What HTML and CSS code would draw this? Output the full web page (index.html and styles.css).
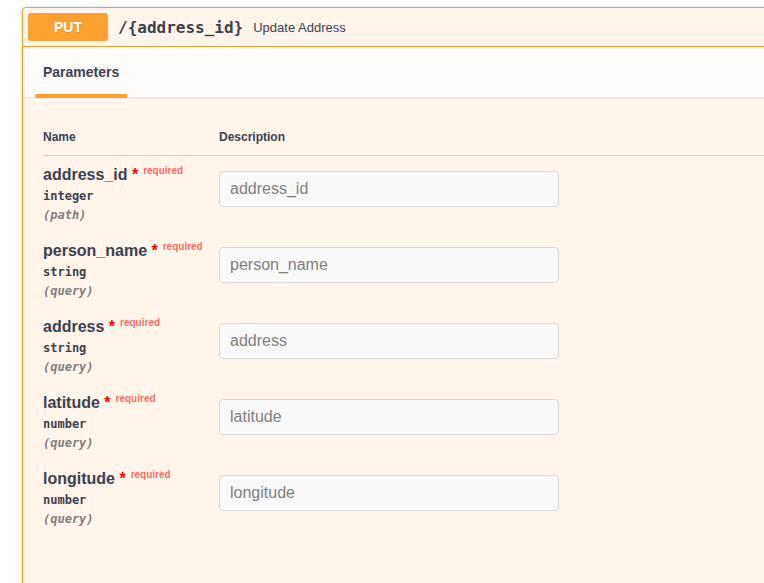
FILE: index.html
```html
<!DOCTYPE html>
<html>
<head>
<meta charset="utf-8">
<link rel="stylesheet" href="styles.css">
</head>
<body>
<div class="page">
  <div class="opblock">
    <div class="summary">
      <span class="method">PUT</span>
      <span class="path">/{address_id}</span>
      <span class="desc">Update Address</span>
    </div>
    <div class="section-header">
      <div class="tab-item"><h4><span class="tab-label">Parameters</span></h4></div>
    </div>
    <div class="table-container">
      <div class="params">
        <div class="th">Name</div>
        <div class="th">Description</div>

        <div class="col-name">
          <div class="pname">address_id<span class="star">&nbsp;*</span><span class="req">required</span></div>
          <div class="ptype">integer</div>
          <div class="pin">(path)</div>
        </div>
        <div class="col-desc"><input class="field" type="text" placeholder="address_id"></div>

        <div class="col-name">
          <div class="pname">person_name<span class="star">&nbsp;*</span><span class="req">required</span></div>
          <div class="ptype">string</div>
          <div class="pin">(query)</div>
        </div>
        <div class="col-desc"><input class="field" type="text" placeholder="person_name"></div>

        <div class="col-name">
          <div class="pname">address<span class="star">&nbsp;*</span><span class="req">required</span></div>
          <div class="ptype">string</div>
          <div class="pin">(query)</div>
        </div>
        <div class="col-desc"><input class="field" type="text" placeholder="address"></div>

        <div class="col-name">
          <div class="pname">latitude<span class="star">&nbsp;*</span><span class="req">required</span></div>
          <div class="ptype">number</div>
          <div class="pin">(query)</div>
        </div>
        <div class="col-desc"><input class="field" type="text" placeholder="latitude"></div>

        <div class="col-name">
          <div class="pname">longitude<span class="star">&nbsp;*</span><span class="req">required</span></div>
          <div class="ptype">number</div>
          <div class="pin">(query)</div>
        </div>
        <div class="col-desc"><input class="field" type="text" placeholder="longitude"></div>
      </div>
    </div>
  </div>
</div>
</body>
</html>
```

FILE: styles.css
```css
html, body {
  margin: 0;
  padding: 0;
  background: #fff;
  overflow: hidden;
}
.page {
  padding: 7px 0 0 22px;
  width: 900px;
}
.opblock {
  border: 1px solid #fca130;
  border-radius: 4px;
  background: #fff5ea;
  box-shadow: 0 0 3px rgba(0,0,0,.19);
  min-height: 640px;
  color: #3b4151;
  font-family: "Liberation Sans", Arial, sans-serif;
}
.summary {
  display: flex;
  align-items: center;
  padding: 5px;
  border-bottom: 1px solid #fca130;
}
.method {
  display: block;
  min-width: 80px;
  padding: 6px 0;
  line-height: 16px;
  text-align: center;
  background: #fca130;
  color: #fff;
  font-size: 14px;
  font-weight: 700;
  border-radius: 3px;
  text-shadow: 0 1px 0 rgba(0,0,0,.1);
}
.path {
  font-family: "DejaVu Sans Mono", monospace;
  font-weight: 700;
  font-size: 16px;
  padding: 0 10px;
}
.desc {
  font-size: 13px;
}
.section-header {
  display: flex;
  align-items: center;
  min-height: 50px;
  padding: 0 20px;
  box-sizing: border-box;
  background: rgba(255,255,255,.8);
  box-shadow: 0 1px 2px rgba(0,0,0,.1);
}
.tab-item h4 {
  margin: 0;
  font-size: 14px;
  font-weight: 700;
  line-height: 17px;
}
.tab-label {
  position: relative;
  display: inline-block;
}
.tab-label::after {
  content: "";
  position: absolute;
  left: 50%;
  bottom: -17px;
  width: 120%;
  height: 4px;
  transform: translateX(-50%);
  background: #fca130;
}
.table-container {
  padding: 20px;
}
.params {
  display: grid;
  grid-template-columns: 176px 1fr;
}
.th {
  font-size: 12px;
  font-weight: 700;
  line-height: 13px;
  padding: 14px 0 11px;
  border-bottom: 1px solid rgba(59,65,81,.2);
}
.col-name {
  padding: 10px 0;
}
.col-desc {
  padding: 10px 0;
}
.pname {
  font-size: 16px;
  font-weight: 700;
  line-height: 18px;
  height: 18px;
  white-space: nowrap;
}
.star {
  color: red;
}
.req {
  position: relative;
  top: -6px;
  font-size: 10px;
  line-height: 0;
  padding: 5px;
  color: rgba(255,0,0,.6);
}
.ptype {
  font-family: "DejaVu Sans Mono", monospace;
  font-size: 12px;
  font-weight: 700;
  line-height: 14px;
  padding: 5px 0;
}
.pin {
  font-family: "DejaVu Sans Mono", monospace;
  font-size: 12px;
  font-style: italic;
  font-weight: 700;
  line-height: 14px;
  color: #808080;
}
.field {
  display: block;
  box-sizing: border-box;
  width: 340px;
  height: 36px;
  margin: 5px 0 0;
  padding: 8px 10px;
  border: 1px solid #d9d9d9;
  border-radius: 4px;
  background: #fafafa;
  font-family: "Liberation Sans", Arial, sans-serif;
  font-size: 16px;
  color: #3b4151;
  outline: none;
}
.field::placeholder {
  color: #808080;
}
```
